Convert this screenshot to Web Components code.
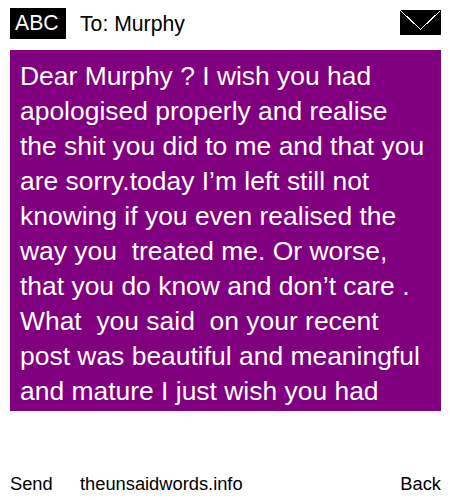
<!DOCTYPE html>
<html>
<head>
<meta charset="utf-8">
<style>
  html, body { margin: 0; padding: 0; background: #fff; }
  body { font-family: "Liberation Sans", Arial, sans-serif; color: #000; }
</style>
</head>
<body>
<phone-screen>
  <message-header slot="header" to="Murphy"></message-header>
  <message-body slot="body">Dear Murphy ? I wish you had apologised properly and realise the shit you did to me and that you are sorry.today I’m left still not knowing if you even realised the way you  treated me. Or worse, that you do know and don’t care . What  you said  on your recent post was beautiful and meaningful and mature I just wish you had</message-body>
  <message-footer slot="footer" site="theunsaidwords.info"></message-footer>
</phone-screen>

<script>
class PhoneScreen extends HTMLElement {
  constructor() {
    super();
    this.attachShadow({ mode: "open" });
    this.shadowRoot.innerHTML = `
      <style>
        :host { display:flex; flex-direction:column; width:450px; height:500px; box-sizing:border-box; padding:8px 9px 0 10px; }
        .foot { margin-top:auto; }
      </style>
      <slot name="header"></slot>
      <slot name="body"></slot>
      <div class="foot"><slot name="footer"></slot></div>
    `;
  }
}

class MessageHeader extends HTMLElement {
  constructor() {
    super();
    this.attachShadow({ mode: "open" });
    const to = this.getAttribute("to");
    this.shadowRoot.innerHTML = `
      <style>
        :host { display:flex; align-items:flex-start; height:31px; margin-bottom:11px; font-size:21.2px; }
        .abc { width:56px; height:31px; box-sizing:border-box; padding-left:5px; background:#000; color:#fff; line-height:30px; }
        .to { margin-left:14px; line-height:31px; }
        svg { display:block; margin:2px 0 0 auto; }
      </style>
      <div class="abc">ABC</div>
      <div class="to">To: ${to}</div>
      <svg width="41" height="25" viewBox="0 0 41 25" shape-rendering="crispEdges">
        <rect width="41" height="25" fill="#000"/>
        <path d="M0.5 0.5 L20.5 19.5 L40.5 0.5" fill="none" stroke="#fff" stroke-width="1"/>
      </svg>
    `;
  }
}

class MessageBody extends HTMLElement {
  constructor() {
    super();
    this.attachShadow({ mode: "open" });
    this.shadowRoot.innerHTML = `
      <style>
        :host { display:block; height:361px; box-sizing:border-box; padding:9px 10px 0; background:#800080; color:#fff; font-size:26.45px; line-height:35px; overflow:hidden; }
        slot { display:block; white-space:pre-wrap; }
      </style>
      <slot></slot>
    `;
  }
}

class MessageFooter extends HTMLElement {
  constructor() {
    super();
    this.attachShadow({ mode: "open" });
    const site = this.getAttribute("site");
    this.shadowRoot.innerHTML = `
      <style>
        :host { display:flex; font-size:18.3px; line-height:21px; padding-bottom:6px; }
        .send { width:70px; }
        .back { margin-left:auto; }
      </style>
      <div class="send">Send</div>
      <div>${site}</div>
      <div class="back">Back</div>
    `;
  }
}

customElements.define("phone-screen", PhoneScreen);
customElements.define("message-header", MessageHeader);
customElements.define("message-body", MessageBody);
customElements.define("message-footer", MessageFooter);
</script>
</body>
</html>
